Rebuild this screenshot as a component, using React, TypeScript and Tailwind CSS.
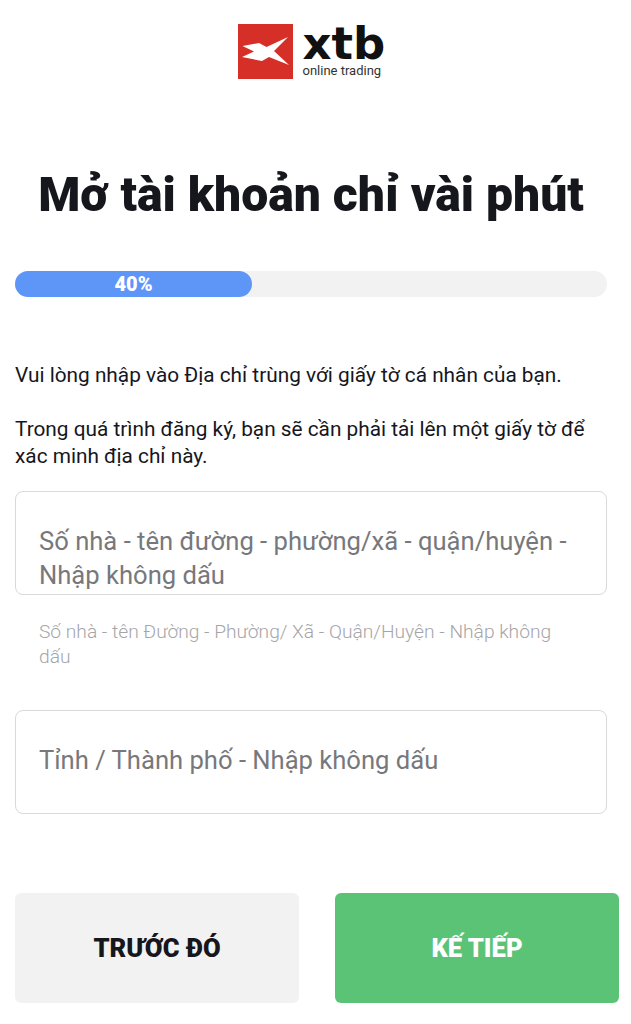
export default function App() {
  return (
    <div className="w-[631px] h-[1024px] overflow-hidden bg-white font-['Roboto',sans-serif] pl-[15px] pr-[12px]">
      <div className="flex justify-center pt-[24px] pr-[12px] h-[79px]">
        <div className="flex">
          <div className="w-[55px] h-[55px] bg-[#d52f27] flex items-center justify-center">
            <svg width="55" height="55" viewBox="0 0 55 55">
              <path d="M4.5 22 L21 19 L28.5 23 L50 13 L36 27 L51 41 L31 33 L24 37 L4 33 L16 27.5 Z" fill="#fff" />
            </svg>
          </div>
          <div className="ml-[10px] flex flex-col w-[82px]">
            <div className="text-[45px] leading-[38px] font-bold text-[#111] font-['DejaVu_Sans',sans-serif] h-[40px] pt-[1px] whitespace-nowrap">xtb</div>
            <div className="text-[13px] leading-[14px] text-[#333] whitespace-nowrap">online trading</div>
          </div>
        </div>
      </div>
      <h1 className="mt-[88px] pr-[12px] text-center text-[48.1px] leading-[56px] font-black text-[#16161d]">Mở tài khoản chỉ vài phút</h1>
      <div className="mt-[48px] w-[592px] h-[26px] rounded-[13px] bg-[#f2f2f2]">
        <div className="w-[237px] h-[26px] rounded-[13px] bg-[#5e96f8] flex items-center justify-center text-[20px] font-black text-white">40%</div>
      </div>
      <p className="mt-[65px] w-[592px] text-[20.8px] leading-[27px] text-[#16161d]">Vui lòng nhập vào Địa chỉ trùng với giấy tờ cá nhân của bạn.</p>
      <p className="mt-[27px] w-[592px] text-[20.8px] leading-[27px] text-[#16161d]">Trong quá trình đăng ký, bạn sẽ cần phải tải lên một giấy tờ để xác minh địa chỉ này.</p>
      <div className="mt-[21px] w-[592px] h-[104px] rounded-[8px] border border-[#d9d9d9] pl-[23px] pr-[24px] pt-[32px] text-[25.6px] leading-[34px] text-[#77787c]">Số nhà - tên đường - phường/xã - quận/huyện - Nhập không dấu</div>
      <p className="mt-[24px] w-[592px] pl-[24px] pr-[36px] text-[19.2px] font-light leading-[25px] text-[#a5a5a8]">Số nhà - tên Đường - Phường/ Xã - Quận/Huyện - Nhập không dấu</p>
      <div className="mt-[41px] w-[592px] h-[104px] rounded-[8px] border border-[#d9d9d9] pl-[23px] pr-[24px] pb-[3px] flex items-center text-[25.6px] text-[#77787c]">Tỉnh / Thành phố - Nhập không dấu</div>
      <div className="mt-[79px] flex gap-[36px]">
        <div className="w-[284px] h-[110px] rounded-[6px] bg-[#f2f2f2] flex items-center justify-center text-[25.6px] font-black text-[#16161d]">TRƯỚC ĐÓ</div>
        <div className="w-[284px] h-[110px] rounded-[6px] bg-[#5bc376] flex items-center justify-center text-[25.6px] font-black text-white">KẾ TIẾP</div>
      </div>
    </div>
  );
}
